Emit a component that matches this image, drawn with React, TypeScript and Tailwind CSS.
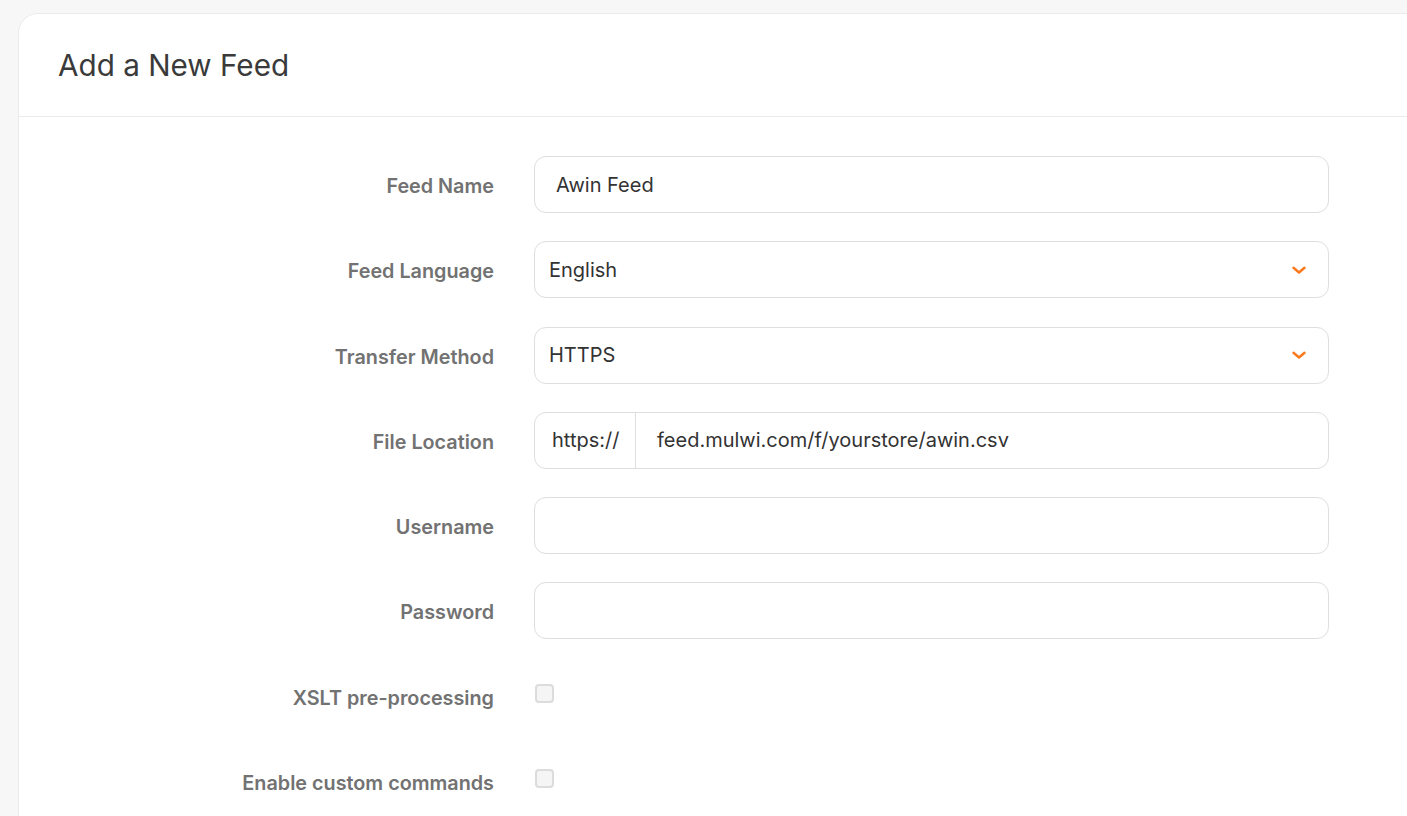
import React from "react";

const Chevron = () => (
  <svg width="16" height="16" viewBox="0 0 16 16" fill="none" className="shrink-0">
    <path d="M2.5 5.8l5.5 4.7 5.5-4.7" stroke="#fb7a1e" strokeWidth="2.5" strokeLinecap="round" strokeLinejoin="round" />
  </svg>
);

const Row = ({ label, children }: { label: string; children: React.ReactNode }) => (
  <div className="flex h-[57px] items-center">
    <label className="w-[436px] shrink-0 pt-[5px] text-right text-[19.8px] font-semibold text-[#727272]">
      {label}
    </label>
    <div className="ml-[40px] w-[795px] shrink-0">{children}</div>
  </div>
);

const box = "flex h-[57px] w-full items-center rounded-[12px] border border-[#dedede] bg-white text-[20px] text-[#333333]";

export default function App() {
  return (
    <div className="min-h-screen bg-[#f7f7f7] pl-[18px] pt-[13px] font-['Inter',sans-serif]">
      <div className="w-[1420px] rounded-tl-[20px] border border-[#ebebeb] bg-white pb-10">
        <div className="flex h-[103px] items-center border-b border-[#ebebeb] px-[39px]">
          <h1 className="text-[29.7px] font-normal text-[#3a3a3a]">Add a New Feed</h1>
        </div>
        <div className="flex flex-col gap-[28.25px] px-[39px] pt-[39px]">
          <Row label="Feed Name">
            <div className={box + " px-[21px]"}>Awin Feed</div>
          </Row>
          <Row label="Feed Language">
            <div className={box + " justify-between px-[14px] pr-[21px]"}>
              <span>English</span>
              <Chevron />
            </div>
          </Row>
          <Row label="Transfer Method">
            <div className={box + " justify-between px-[14px] pr-[21px]"}>
              <span>HTTPS</span>
              <Chevron />
            </div>
          </Row>
          <Row label="File Location">
            <div className={box}>
              <span className="flex h-full w-[101px] items-center border-r border-[#dedede] pl-[17px]">https://</span>
              <span className="pl-[21px]">feed.mulwi.com/f/yourstore/awin.csv</span>
            </div>
          </Row>
          <Row label="Username">
            <div className={box} />
          </Row>
          <Row label="Password">
            <div className={box} />
          </Row>
          <Row label="XSLT pre-processing">
            <div className="flex h-[57px] items-start pt-[16px]">
              <span className="ml-px h-[19px] w-[19px] rounded-[4px] border-2 border-[#dcdcdc] bg-[#f5f5f5]" />
            </div>
          </Row>
          <Row label="Enable custom commands">
            <div className="flex h-[57px] items-start pt-[16px]">
              <span className="ml-px h-[19px] w-[19px] rounded-[4px] border-2 border-[#dcdcdc] bg-[#f5f5f5]" />
            </div>
          </Row>
        </div>
      </div>
    </div>
  );
}
